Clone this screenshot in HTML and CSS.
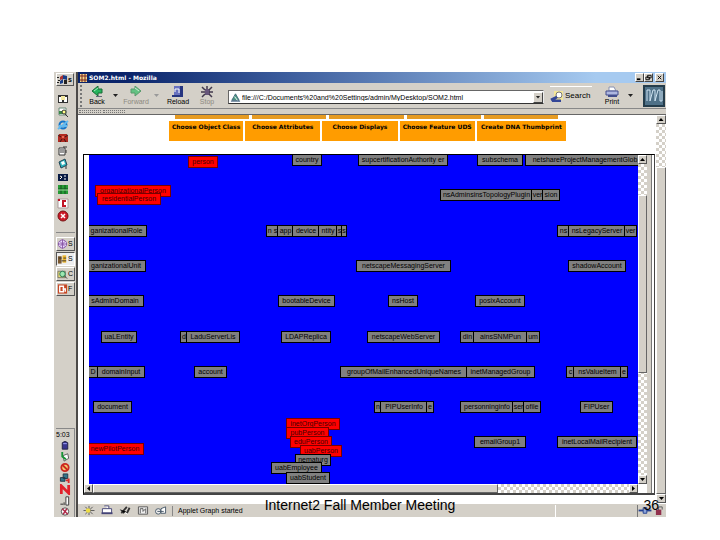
FILE: index.html
```
<!DOCTYPE html>
<html lang="en">
<head>
<meta charset="utf-8">
<title>SOM2.html - Mozilla</title>
<link rel="stylesheet" href="styles.css">
</head>
<body>
<main class="slide">
<div class="desktop">
  <aside class="taskbar">
    <button class="start" aria-label="Start"><svg width="11" height="11" viewBox="0 0 11 11"><path fill="#222" d="M0 3h2v1H0zM1 6h2v1H1zM0 8h2v1H0z"/><path fill="#a33" d="M3 3l3-2v4L3 6z"/><path fill="#173c86" d="M6 1l4 1v4L6 5zM3 7l3-2v4l-3 1z"/><path fill="#222" d="M7 6h3v4H7z"/></svg>s</button>
    <div class="quick">
      <svg viewBox="0 0 12 12"><path fill="#333" d="M1 2h10v8H1z"/><path fill="#fff" d="M2 4h3v5H2zM7 4h3v5H7z"/><path fill="#f4e9a0" d="M4 3h4v4H4z"/></svg>
      <svg viewBox="0 0 12 12"><path fill="#fff" stroke="#687" d="M2 2h7v7H2z"/><path fill="#3a8a48" d="M2 5h4v3H2z"/><circle cx="7" cy="6" r="2" fill="#ff8" stroke="#333"/><path stroke="#333" d="M8 8l3 3"/></svg>
      <svg viewBox="0 0 12 12"><circle cx="6" cy="6" r="3.5" fill="none" stroke="#1474c8" stroke-width="2"/><path stroke="#60baf0" stroke-width="2" d="M2 7h8M1 10L11 2"/></svg>
      <svg viewBox="0 0 12 12"><path fill="#b02a20" d="M2 2h8v2h1v6H1V4h1z"/><path stroke="#391414" d="M1 3l3 2M11 3L8 5M3 10l2-3M9 10L7 7"/><path fill="#e86a54" d="M5 4h2v2H5z"/></svg>
      <svg viewBox="0 0 12 12"><path fill="#fff" stroke="#333" d="M2 3h6v7H2z"/><path stroke="#333" d="M3 5h4M3 7h4M6 2h4M9 5v3"/></svg>
      <svg viewBox="0 0 12 12"><path fill="#2bb2bc" stroke="#245" d="M2 4l6-3 2 6-6 3z"/><path fill="#fff" d="M4 4l3-1 1 3-3 1z"/><path stroke="#333" d="M9 8v3"/></svg>
      <svg viewBox="0 0 12 12"><path fill="#081a44" d="M1 3h10v7H1z"/><path stroke="#fff" d="M3 5l2 1-2 2M7 5h2M7 8h2"/></svg>
      <svg viewBox="0 0 12 12"><path fill="#269b35" d="M1 1h10v9H1z"/><path stroke="#134f20" d="M1 5h10M4 1v9M8 1v9"/><path stroke="#9ddc9f" d="M1 6h10"/></svg>
      <svg viewBox="0 0 12 12"><path fill="#fff" stroke="#a99" d="M1 2h10v9H1z"/><path fill="none" stroke="#c21626" stroke-width="2" d="M9 4H6v5h3"/><path fill="#c21626" d="M1 2h2v2H1z"/></svg>
      <svg viewBox="0 0 12 12"><circle cx="6" cy="6" r="5" fill="#cc1928" stroke="#711"/><path stroke="#fff" stroke-width="1.5" d="M4 4l4 4M8 4L4 8"/></svg>
    </div>
    <div class="tasks">
      <button><svg viewBox="0 0 12 12"><circle cx="6" cy="6" r="4.5" fill="#eddcff" stroke="#8756a4"/><path stroke="#8756a4" d="M6 1v10M1 6h10M3 3l6 6M9 3L3 9"/></svg>S</button>
      <button class="active"><svg viewBox="0 0 12 12"><path fill="#7b5930" d="M1 3h4v8H1z"/><path fill="#efb62c" d="M6 2h4v8H6z"/><path stroke="#333" d="M2 5h3M7 5h3M5 8h5"/></svg>S</button>
      <button><svg viewBox="0 0 12 12"><path fill="#eeda75" stroke="#776" d="M1 3h8v7H1z"/><circle cx="6" cy="6" r="3" fill="#9de7b0" stroke="#275"/><path stroke="#333" d="M8 8l3 3"/></svg>C</button>
      <button><svg viewBox="0 0 12 12"><path fill="#c84724" d="M1 1h10v10H1z"/><path fill="none" stroke="#fff" stroke-width="1.5" d="M3 3h4v6H3zM6 6h3v3"/></svg>F</button>
    </div>
    <div class="tray">
      <span>5:03</span>
      <svg viewBox="0 0 12 12"><path fill="#39358f" stroke="#224" d="M3 3q3-3 6 0v7H3z"/><path stroke="#aaf" d="M4 4h4"/></svg>
      <svg viewBox="0 0 12 12"><path fill="#fff" stroke="#555" d="M4 5l5-2 1 5-5 3z"/><path fill="none" stroke="#169435" stroke-width="2" d="M3 1v5l4 3"/></svg>
      <svg viewBox="0 0 12 12"><circle cx="6" cy="6" r="4" fill="#f4cf70" stroke="#cc2821" stroke-width="2"/><path stroke="#cc2821" stroke-width="2" d="M3 3l6 6"/></svg>
      <svg viewBox="0 0 12 12"><path fill="#31768b" stroke="#234" d="M4 1h5v5H4zM1 5h5v4H1z"/><path stroke="#d72a2a" stroke-width="2" d="M7 8h4M10 6v5"/></svg>
      <svg viewBox="0 0 12 12"><path fill="none" stroke="#e2202a" stroke-width="3" d="M2 11V2l8 8V1"/></svg>
      <svg viewBox="0 0 12 12"><path stroke="#222" d="M1 10h3M5 8v3"/><path fill="#fff" stroke="#333" d="M7 2h3v9H7z"/></svg>
      <svg viewBox="0 0 12 12"><circle cx="6" cy="6" r="4" fill="#fff" stroke="#444"/><path stroke="#b12948" stroke-width="1.5" d="M3 3l6 6M8 3L4 9"/></svg>
    </div>
  </aside>

  <section class="browser">
    <header class="titlebar">
      <svg width="7" height="8" viewBox="0 0 7 8"><path fill="#f4d78c" d="M0 0h7v8H0z"/><path stroke="#7b2820" d="M0 2h7M0 6h7M2 0v8M5 0v8"/></svg>
      <h1>SOM2.html - Mozilla</h1>
      <button aria-label="Minimize"><svg viewBox="0 0 8 8"><path stroke="#000" stroke-width="2" d="M1 6h4"/></svg></button>
      <button aria-label="Restore"><svg viewBox="0 0 8 8"><path fill="none" stroke="#000" d="M3 1.500h4v3H3zM1 3.500h4v3H1z"/></svg></button>
      <button class="close" aria-label="Close"><svg viewBox="0 0 8 8"><path stroke="#000" d="M2 2l4 4M6 2L2 6"/></svg></button>
    </header>
    <nav class="toolbar">
      <i class="grip"></i>
      <button class="tool"><svg viewBox="0 0 14 12"><path fill="#27b35c" stroke="#176a35" d="M2 5l6-5v3h4v4H8v3z"/><path stroke="#a0efbc" d="M4 5l4-3"/><path fill="#667" d="M6 10h6v1H6z"/></svg>Back</button>
      <i class="arrow"></i>
      <button class="tool off forward"><svg viewBox="0 0 14 12"><path fill="#62c282" stroke="#589a6c" d="M12 5L6 0v3H2v4h4v3z"/><path stroke="#d5ead7" d="M6 2l4 3"/></svg>Forward</button>
      <i class="arrow off"></i>
      <button class="tool reload"><svg viewBox="0 0 14 12"><path fill="#6871bf" d="M3 0h8v9H3z"/><path fill="#263580" d="M9 0h3v10H9zM1 9h11v2H1z"/><path fill="none" stroke="#fff" d="M4 6V3h4v4"/></svg>Reload</button>
      <button class="tool off"><svg viewBox="0 0 14 12"><path fill="#67567a" d="M5 3h5v6H5z"/><path stroke="#41394c" stroke-width="1.500" d="M2 1l3 3M12 1L9 4M1 6h4M9 6h4M2 11l3-3M12 11L9 8M7 0v3"/></svg>Stop</button>
      <label class="location"><svg viewBox="0 0 12 12"><path fill="#4c9b84" stroke="#467" d="M2 9l4-7 4 7z"/><path stroke="#357" d="M1 10h10"/><path stroke="#fff" d="M5 5l3 4"/></svg><input aria-label="Location" value="file:///C:/Documents%20and%20Settings/admin/MyDesktop/SOM2.html"><button aria-label="Address list"><i class="arrow"></i></button></label>
      <button class="search"><svg viewBox="0 0 14 12"><path fill="#f4e798" d="M4 1h9v9H4z"/><circle cx="9" cy="5" r="3" fill="#fff" stroke="#777"/><path stroke="#334697" stroke-width="3" d="M1 10l6-3M2 11h9"/></svg>Search</button>
      <button class="tool print"><svg viewBox="0 0 14 12"><path fill="#fff" stroke="#8892b2" d="M4 1h5l2 4H4z"/><path fill="#aeb7e0" stroke="#424d8c" d="M1 5h12v4H1z"/><path stroke="#424d8c" stroke-width="2" d="M3 10h9"/></svg>Print</button>
      <i class="arrow"></i>
      <svg class="brand" viewBox="0 0 22 22"><path fill="#4f7188" stroke="#253d4c" stroke-width="2" d="M1 1h20v20H1z"/><path fill="none" stroke="#cfe4f2" d="M4 16V5h3v11l3-11h2v11l3-11h2v11h2V6"/></svg>
    </nav>
    <div class="personal"><i></i><i></i></div>

    <div class="viewport">
      <div class="page">
        <div class="tabs"><i></i><i></i><i></i><i></i><i></i></div>
        <div class="actions">
          <button>Choose Object Class</button>
          <button>Choose Attributes</button>
          <button>Choose Displays</button>
          <button>Choose Feature UDS</button>
          <button>Create DNA Thumbprint</button>
        </div>
        <div class="applet">
          <div class="graph" id="graph"></div>
          <div class="vscroll inner"><button class="up" aria-label="Graph up"></button><i class="gap"></i><i class="thumb"></i><i class="rest"></i><button class="down" aria-label="Graph down"></button></div>
          <div class="hscroll"><button class="left" aria-label="Graph left"></button><i class="thumb"></i><i class="rest"></i><button class="right" aria-label="Graph right"></button></div>
        </div>
      </div>
      <div class="vscroll outer"><button class="up" aria-label="Page up"></button><i class="gap"></i><i class="thumb"></i><button class="down" aria-label="Page down"></button></div>
    </div>

    <footer class="status">
      <svg viewBox="0 0 14 12"><path stroke="#555" d="M1 6h12M7 1v10M3 2l8 8M11 2l-8 8"/><circle cx="6" cy="6" r="2.500" fill="#ed4"/></svg>
      <svg viewBox="0 0 14 12"><path fill="#fff" stroke="#447" d="M2 4h10v5H2zM4 1h5v3"/><path stroke="#447" stroke-width="2" d="M1 9h12"/></svg>
      <svg viewBox="0 0 14 12"><path stroke="#333" stroke-width="2" d="M3 9l6-7M9 9l3-6"/><path stroke="#fff" d="M3 6l7 4"/><path stroke="#333" d="M2 5l3 4 3-2"/></svg>
      <svg viewBox="0 0 14 12"><path fill="#eee" stroke="#555" d="M2 2h10v8H2z"/><path fill="none" stroke="#555" d="M4 9V4h3v3l3-3v5"/></svg>
      <svg viewBox="0 0 14 12"><circle cx="4" cy="7" r="3" fill="#eee" stroke="#456"/><path fill="#fff" stroke="#456" d="M7 4l5-2v7H7z"/><path stroke="#456" d="M3 7h7"/></svg>
      <p>Applet Graph started</p>
      <i class="pane"></i>
      <svg class="plug" viewBox="0 0 14 12"><path stroke="#223f91" stroke-width="2" d="M0 6h14"/><path fill="#8da5da" stroke="#223f91" d="M5 3h4v6H5z"/></svg>
      <svg class="lock" viewBox="0 0 10 12"><path fill="none" stroke="#555" d="M4 6V2h4v3"/><path fill="#91314d" d="M1 5h6v6H1z"/></svg>
    </footer>
  </section>
</div>
<div class="caption"><span></span><p>Internet2 Fall Member Meeting</p><b>36</b></div>
</main>
<script src="graph.js"></script>
</body>
</html>
```
FILE: styles.css
```
* { box-sizing: border-box; }
body { margin: 0; background: #fff; color: #000; font: 7px/10px "Liberation Sans", Arial, sans-serif; }
button, input { font: inherit; color: inherit; margin: 0; padding: 0; border: 0; border-radius: 0; background: none; }
h1, p { margin: 0; }
svg { display: block; flex: none; }
.slide { position: relative; min-height: 100vh; padding: 72px 54px 24px; }
.desktop { display: flex; }

.taskbar { flex: none; width: 24px; display: flex; flex-direction: column; background: #d4d0c8; border-right: 2px solid #4c4a48; padding: 1px 1px 0 2px; }
.start, .tasks button { display: flex; align-items: center; overflow: hidden; border: 1px solid; border-color: #fff #555 #555 #fff; white-space: nowrap; }
.start { height: 13px; font-weight: bold; width: 18px; }
.quick { display: flex; flex-direction: column; align-items: center; padding: 7px 6px 0 0; gap: 1px; }
.quick svg, .tray svg { width: 12px; height: 12px; }
.tasks { display: flex; flex-direction: column; border-top: 1px solid #888; margin-top: 10px; padding-top: 4px; gap: 1px; }
.tasks button { width: 19px; height: 14px; }
.tasks svg { width: 11px; height: 12px; }
.tasks .active { background: #eee; border-color: #555 #fff #fff #555; }
.tray { margin-top: auto; border-top: 1px solid #888; border-right: 1px solid #888; padding-top: 1px; display: flex; flex-direction: column; align-items: center; width: 19px; white-space: nowrap; }
.tray span { width: 100%; height: 10px; }
.tray svg { height: 11px; }

.browser { flex: 1; min-width: 0; }
.titlebar { display: flex; align-items: center; height: 11px; padding: 0 2px; background: linear-gradient(90deg, #0a246a 8%, #3b5c9c 35%, #a6caf0 88%); color: #fff; }
.titlebar h1 { flex: 1; margin-left: 2px; font: bold 6px/10px "DejaVu Sans", sans-serif; }
.titlebar button { width: 9px; height: 9px; background: #d4d0c8; border: 1px solid; border-color: #fff #444 #444 #fff; }
.titlebar button svg { width: 7px; height: 7px; }
.titlebar .close { margin-left: 2px; }
.toolbar { display: flex; align-items: center; height: 26px; padding: 0 1px 0 2px; background: #d4d0c8; border-bottom: 1px solid #888; }
.grip { width: 3px; height: 22px; border-left: 2px dotted #777; }
.tool { display: flex; flex-direction: column; align-items: center; width: 28px; line-height: 8px; }
.tool svg { width: 16px; height: 12px; }
.tool.off { color: #8d8980; }
.tool.forward { width: 32px; }
.tool.reload { width: 30px; margin-left: 2px; }
.arrow { flex: none; width: 5px; height: 3px; background: #222; clip-path: polygon(0 0, 100% 0, 50% 100%); }
.toolbar > .arrow { margin: 0 2px; }
.arrow.off { background: #999; }
.location { flex: 1; display: flex; align-items: center; height: 14px; min-width: 0; margin: 3px 6px 0 7px; background: #fff; border: 1px solid; border-color: #666 #eee #333 #666; }
.location svg { width: 11px; height: 11px; margin: 0 1px; }
.location input { flex: 1; min-width: 0; height: 11px; outline: 0; }
.location button { display: grid; place-items: center; width: 10px; height: 11px; background: #d4d0c8; border: 1px solid; border-color: #fff #444 #444 #fff; }
.search { display: flex; align-items: center; gap: 1px; width: 42px; height: 20px; border-top: 1px solid #fff; font-size: 8px; }
.search svg { width: 14px; height: 12px; }
.print { margin-left: 6px; }
.brand { width: 22px; height: 22px; margin-left: 8px; }
.personal { display: flex; gap: 2px; height: 6px; padding: 1px 1px; background: #d4d0c8; border-bottom: 1px solid #666; }
.personal i { width: 22px; height: 3px; border: 1px dotted #777; border-width: 1px 0; }

.viewport { display: flex; height: 388px; }
.page { flex: 1; min-width: 0; }
.tabs { display: grid; grid-template-columns: repeat(5, 1fr); column-gap: 3px; height: 4px; margin: 0 98px 2px 97px; }
.tabs i { background: #e69b22; }
.actions { display: grid; grid-template-columns: 74fr 75fr 75fr 75fr 89fr; column-gap: 2px; height: 20px; margin: 0 90px 13px 91px; }
.actions button { background: #ff9c00; font: bold 6px/8px "DejaVu Sans", sans-serif; padding: 2px 0 10px; white-space: nowrap; }
.applet { display: grid; grid-template: 329px 9px / 1fr 9px; margin: 0 1px 0 5px; padding-right: 7px; border: 1px solid #000; border-bottom: 2px solid #444; border-right: 1px solid #444; background: linear-gradient(270deg, #fff 2px, #777 2px 3px, #d4d0c8 3px 7px, #fff 7px); }
.graph { position: relative; overflow: hidden; margin-left: 5px; background: #00f; }
.node { position: absolute; height: 12px; border: 1px solid #000; background: #808080; line-height: 10px; text-align: center; white-space: nowrap; }
.node.red { background: #f00; border-color: #700; color: #400; }
.vscroll { display: flex; flex-direction: column; }
.vscroll, .hscroll { background: repeating-conic-gradient(#d4d0c8 0 25%, #fff 0 50%) 0 0 / 6px 6px; }
.vscroll button, .hscroll button { position: relative; flex: none; width: 9px; height: 9px; background: #d4d0c8; border: 1px solid; border-color: #fff #555 #555 #fff; }
.vscroll button::after, .hscroll button::after { content: ""; display: block; width: 5px; height: 3px; margin: auto; background: #000; clip-path: polygon(50% 0, 100% 100%, 0 100%); }
.vscroll .down::after { transform: rotate(180deg); }
.hscroll .left::after { transform: rotate(-90deg); }
.hscroll .right::after { transform: rotate(90deg); }
.thumb { background: #d4d0c8; border: 1px solid; border-color: #fff #666 #666 #fff; }
.inner .gap { flex: 31; }
.inner .thumb { flex: 177; }
.inner .rest { flex: 103; }
.hscroll { display: flex; }
.hscroll .thumb { flex: 405; }
.hscroll .rest { flex: 131; }
.outer { width: 10px; }
.outer button { width: 10px; }
.outer .gap { flex: 43; }
.outer .thumb { flex: 327; }

.status { display: flex; align-items: center; height: 14px; padding: 0 2px 0 4px; background: #d4d0c8; border-top: 1px solid #fff; }
.status svg { width: 14px; height: 11px; margin-right: 4px; }
.status p { flex: 1; border-left: 1px solid #888; padding-left: 5px; }
.status .pane { width: 83px; height: 12px; border-left: 1px solid #fff; border-right: 1px solid #777; }
.status .plug { margin-right: 3px; }
.status .lock { width: 9px; margin: 0; }

.caption { position: absolute; left: 54px; right: 54px; bottom: 26px; display: grid; grid-template-columns: 1fr auto 1fr; font-size: 14px; line-height: 20px; padding-right: 7px; padding-left: 7px; }
.caption b { font-weight: normal; text-align: right; }
```
FILE: graph.js
```
// Each row: top, then [left, width, label, highlighted] for its nodes, back to front.
const rows = [
  [-1, [203, 30, "country"], [269, 90, "supcertificationAuthority er"], [388, 46, "subschema"], [436, 120, "netshareProjectManagementGlob"]],
  [1, [99, 30, "person", 1]],
  [30, [6, 76, "organizationalPerson", 1]],
  [38, [8, 64, "residentialPerson", 1]],
  [34, [351, 93, "nsAdminsinsTopologyPlugin"], [442, 13, "ver"], [453, 18, "sion"]],
  [70, [-3, 61, "ganizationalRole"], [177, 13, "n s"], [188, 17, "app"], [203, 28, "device"], [229, 20, "ntity"], [247, 7, "s"], [252, 6, "s"], [468, 13, "ns"], [479, 58, "nsLegacyServer"], [535, 13, "ver"]],
  [105, [-3, 60, "ganizationalUnit"], [267, 95, "netscapeMessagingServer"], [479, 58, "shadowAccount"]],
  [140, [-3, 58, "sAdminDomain"], [189, 57, "bootableDevice"], [299, 30, "nsHost"], [386, 50, "posixAccount"]],
  [176, [12, 36, "uaLEntity"], [91, 8, "d"], [97, 54, "LaduServerLis"], [192, 50, "LDAPReplica"], [278, 73, "netscapeWebServer"], [371, 15, "din"], [384, 55, "ainsSNMPun"], [437, 14, "um"]],
  [211, [-2, 12, "D"], [8, 48, "domainInput"], [105, 33, "account"], [251, 128, "groupOfMailEnhancedUniqueNames"], [377, 69, "inetManagedGroup"], [477, 9, "c"], [484, 49, "nsValueItem"], [531, 8, "e"]],
  [246, [4, 39, "document"], [285, 8, "n"], [291, 48, "PIPUserInfo"], [337, 8, "e"], [371, 54, "personninginfo"], [423, 13, "ser"], [434, 18, "ofile"], [491, 33, "FIPUser"]],
  [281, [385, 52, "emailGroup1"], [468, 80, "inetLocalMailRecipient"]],
  [288, [-3, 58, "newPilotPerson", 1]],
  [263, [197, 54, "inetOrgPerson", 1]],
  [272, [197, 43, "pubPerson", 1]],
  [281, [201, 42, "eduPerson", 1]],
  [290, [211, 42, "uabPerson", 1]],
  [299, [206, 36, "nematurg"]],
  [307, [182, 51, "uabEmployee"]],
  [317, [197, 44, "uabStudent"]]
];
const graph = document.getElementById("graph");
for (const [top, ...nodes] of rows) {
  for (const [left, width, label, red] of nodes) {
    const el = document.createElement("div");
    el.className = red ? "node red" : "node";
    el.style.left = left + "px";
    el.style.top = top + "px";
    el.style.width = width + "px";
    el.textContent = label;
    graph.append(el);
  }
}
```
